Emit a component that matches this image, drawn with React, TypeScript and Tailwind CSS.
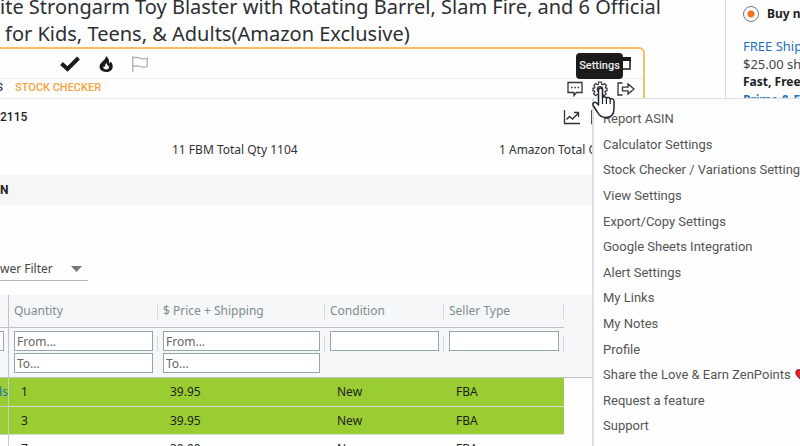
import React from 'react';

const menuItems = [
  'Report ASIN',
  'Calculator Settings',
  'Stock Checker / Variations Settings',
  'View Settings',
  'Export/Copy Settings',
  'Google Sheets Integration',
  'Alert Settings',
  'My Links',
  'My Notes',
  'Profile',
  'Share the Love & Earn ZenPoints',
  'Request a feature',
  'Support',
];

const offers = [
  { seller: 'ds', quantity: '1', price: '39.95', condition: 'New', type: 'FBA' },
  { seller: '', quantity: '3', price: '39.95', condition: 'New', type: 'FBA' },
  { seller: '', quantity: '7', price: '39.99', condition: 'New', type: 'FBA' },
];

const CheckIcon = () => (
  <svg className="w-5 h-4" viewBox="0 0 20 16" fill="none" stroke="#1b1b1b" strokeWidth="4">
    <path d="M1.5 7.5l6 5.5L18.5 2" />
  </svg>
);

const FlameIcon = () => (
  <svg className="w-4 h-4" viewBox="0 0 16 16" fill="#1b1b1b" fillRule="evenodd">
    <path d="M8 0c-.2 2.6-1.6 3.600-3.200 5.200C3 7 1.500 8.400 1.500 10.600 1.500 14 4.400 16 8 16s6.700-2 6.700-5.600c0-2-.9-3.600-2.200-4.800-.1.900-.6 1.500-1.300 1.800C11.400 4.300 10.500 1.600 8 0zM8.600 6.800c-.2 1.700.9 2.200 1.900 3.200 1.100 1.200.4 3.400-1.900 3.400-2.100 0-3.600-1-3.400-3 .9.700 1.700.4 1.900-.5.200-1.200.3-2.300 1.500-3.100z" />
  </svg>
);

const FlagIcon = () => (
  <svg className="w-4 h-4" viewBox="0 0 16 16" fill="none" stroke="#a9a9a9" strokeWidth="1.200">
    <path d="M.8 0v16M.8 2C3.500.8 5.500 1.200 8 2.200s4.500 1 7.200 0v8.300c-2.700 1-4.700 1-7.200 0s-4.500-1-7.200 0" />
  </svg>
);

const WindowIcon = () => (
  <svg className="w-4 h-4" viewBox="0 0 16 16" fill="none" stroke="#1b1b1b">
    <path d="M1 2h14v11H1z" strokeWidth="1.500" />
    <path d="M0 3h16" strokeWidth="4" />
  </svg>
);

const ChatIcon = () => (
  <svg className="w-4 h-4" viewBox="0 0 16 16" fill="none" stroke="#333" strokeWidth="1.300">
    <path d="M1 1.500h14v10H9.500L7 14.500v-3H1z" />
    <path d="M4 6.500h1.500M7.300 6.500h1.500M10.600 6.500h1.500" strokeWidth="1.600" />
  </svg>
);

const GearIcon = () => (
  <svg className="w-4 h-4" viewBox="0 0 16 16" fill="none" stroke="#333" strokeWidth="1.200">
    <path d="M6.500 1h3v2l1.500.7 1.500-1.200 2 2-1.200 1.500.5 1.200H15v2.600h-1.600l-.5 1.400 1.200 1.500-2 2-1.500-1.200-1.100.5v1.500h-3V14l-1.400-.6-1.500 1.200-2-2 1.200-1.500-.5-1.300H1V7.200h1.500L3 6 1.800 4.500l2-2 1.500 1.200L6.500 3z" />
    <circle cx="8" cy="8.300" r="2.700" />
  </svg>
);

const ExitIcon = () => (
  <svg className="w-[18px] h-4" viewBox="0 0 18 16" fill="none" stroke="#333" strokeWidth="1.300">
    <path d="M5.500 2H1v12h4.500" />
    <path d="M5.500 6.200H11V3l6 5-6 5V9.800H5.500z" />
  </svg>
);

const ChartIcon = () => (
  <svg className="w-[18px] h-4" viewBox="0 0 18 16" fill="none" stroke="#333" strokeWidth="1.300">
    <path d="M2.500 1v13.500H18M4.500 10.500l3-3 3 2.500 5.500-5.500M12 3.500h4.500V8" />
  </svg>
);

const BarsIcon = () => (
  <svg className="w-4 h-4" viewBox="0 0 16 16" fill="none" stroke="#1b1b1b" strokeWidth="1.500">
    <path d="M1 1v13.500h14M5 14V8M9 14V4M13 14V9" />
  </svg>
);

const HeartIcon = () => (
  <svg className="w-3.5 h-3.5 shrink-0" viewBox="0 0 14 14">
    <path d="M7 12.500C3 9.500.8 7.200.8 4.500.8 1 5.300.6 7 3.600 8.700.6 13.200 1 13.200 4.500c0 2.700-2.200 5-6.200 8z" fill="#e5252a" stroke="#6d1a1c" />
  </svg>
);

const HandCursor = () => (
  <svg className="absolute left-0 top-2 z-30 w-6 h-8 pointer-events-none" viewBox="0 0 24 32" fill="#fff" stroke="#1f2430" strokeWidth="1.500" strokeLinejoin="round">
    <path d="M6.500 18V3c0-2.600 4-2.600 4 0v8c.5-1.900 3.700-1.700 3.900.5.700-1.500 3.600-1.200 3.800.9.900-1.100 3.600-.8 3.800 1.600v7.500c0 5.500-3 9-8.500 9-4.500 0-6.500-2.400-8.200-5.500L1.200 18.500c-1.300-2.600 1.600-4.300 3.300-2.500z" />
    <path d="M10.500 11v6M14.400 12v5M18.200 13v4" strokeWidth="1.200" />
  </svg>
);

const SettingsMenu = () => (
  <ul className="absolute left-0 top-full z-20 grid auto-rows-fr w-60 h-[360px] pt-[7px] pb-[19px] border-l-2 border-t border-[#dfdfe3] bg-[#fefefe] text-[13px] text-[#555]">
    {menuItems.map((item) => (
      <li key={item} className="flex items-center pl-[9px]">
        <button type="button" className="flex items-center gap-1 whitespace-nowrap">
          {item}
          {item.startsWith('Share') && <HeartIcon />}
        </button>
      </li>
    ))}
  </ul>
);

const Toolbar = () => (
  <div className="flex items-center justify-between h-[30px] border-b border-[#ececf0] pl-[60px] pr-3">
    <div className="flex items-center gap-[18px]">
      <button type="button" aria-label="Eligible"><CheckIcon /></button>
      <button type="button" aria-label="Hot item"><FlameIcon /></button>
      <button type="button" aria-label="Flag"><FlagIcon /></button>
    </div>
    <button type="button" aria-label="Window"><WindowIcon /></button>
  </div>
);

const Tabs = () => (
  <div className="flex items-center justify-between h-5 border-b border-[#ececf0] pr-2 font-['Roboto',sans-serif] text-[11px]">
    <div className="flex items-center gap-3 font-medium">
      <a href="#settings" className="w-[3px] flex justify-end overflow-hidden text-[#333]">S</a>
      <a href="#stock" className="text-[#f2a33c]">STOCK CHECKER</a>
    </div>
    <div className="flex items-center gap-[9px] h-full">
      <button type="button" aria-label="Messages"><ChatIcon /></button>
      <div className="relative flex items-center h-full">
        <button type="button" aria-label="Settings"><GearIcon /></button>
        <span className="absolute -left-4 bottom-full z-20 w-[47px] h-[26px] text-center leading-[26px] rounded bg-[#1b1b1b] text-[#eee] font-medium" role="tooltip">
          Settings
        </span>
        <SettingsMenu />
        <HandCursor />
      </div>
      <button type="button" aria-label="Log out"><ExitIcon /></button>
    </div>
  </div>
);

const separator = 'w-px h-4 bg-[#d5dadd]';
const filterInput = 'block w-full h-5 px-[2px] border border-[#95a5ac] bg-white placeholder:text-[#666]';

const HeaderCell = ({ children }: { children: React.ReactNode }) => (
  <th scope="col" className="p-0 border-b border-[#bdc3c7] font-normal text-left text-[#7f8c8d]">
    <div className="flex items-center justify-between pl-[5px]">
      {children}
      <span className={separator} />
    </div>
  </th>
);

const FilterCell = ({ label, range }: { label: string; range?: boolean }) => (
  <td className="p-0 align-top border-b border-[#bdc3c7]">
    <div className="flex justify-between gap-1 pt-[3px] pl-[5px]">
      <div className="grow flex flex-col gap-[2px]">
        <input className={filterInput} aria-label={label} placeholder={range ? 'From...' : ''} />
        {range && <input className={filterInput} aria-label={`${label} to`} placeholder="To..." />}
      </div>
      <span className={`${separator} mt-[5px]`} />
    </div>
  </td>
);

const OffersTable = () => (
  <table className="w-full table-fixed border-separate border-spacing-0 font-['Noto_Sans',sans-serif] text-[12px] leading-4">
    <colgroup>
      <col className="w-[9px]" />
      <col className="w-[149px]" />
      <col className="w-[167px]" />
      <col className="w-[119px]" />
      <col className="w-[120px]" />
      <col />
    </colgroup>
    <thead className="bg-[#f5f7f8]">
      <tr className="h-[33px]">
        <td className="p-0 border-r border-b border-[#bdc3c7]" />
        <HeaderCell>Quantity</HeaderCell>
        <HeaderCell>$ Price + Shipping</HeaderCell>
        <HeaderCell>Condition</HeaderCell>
        <HeaderCell>Seller Type</HeaderCell>
        <td className="p-0" />
      </tr>
      <tr className="h-[50px]">
        <td className="p-0 align-top border-r border-b border-[#bdc3c7]">
          <div className="w-1 h-5 mt-[3px] border border-l-0 border-[#95a5ac] bg-white" />
        </td>
        <FilterCell label="Quantity" range />
        <FilterCell label="Price" range />
        <FilterCell label="Condition" />
        <FilterCell label="Seller type" />
        <td className="p-0 border-b border-[#bdc3c7]" />
      </tr>
    </thead>
    <tbody className="text-[#222]">
      {offers.map((offer, i) => {
        const cell = i < 2 ? 'p-0 pl-3 bg-[#9acd32] border-b border-[#d9dcde]' : 'p-0 pl-3';
        return (
          <tr key={i} className={i === 0 ? 'h-[29px]' : 'h-[28px]'}>
            <td className={i < 2 ? 'p-0 bg-[#9acd32] border-b border-r border-[#c5cacc]' : 'p-0 border-r border-[#c5cacc]'}>
              <a href="#seller" className="flex justify-end w-2 overflow-hidden text-[#1f6fc0]">{offer.seller}</a>
            </td>
            <td className={cell}>{offer.quantity}</td>
            <td className={cell}>{offer.price}</td>
            <td className={cell}>{offer.condition}</td>
            <td className={cell}>{offer.type}</td>
            <td className="p-0" />
          </tr>
        );
      })}
    </tbody>
  </table>
);

const BuyBox = () => (
  <aside className="w-[75px] shrink-0 overflow-hidden border-l border-[#d5d9dd] pl-[17px] whitespace-nowrap text-[12px] leading-[18px] text-[#222]">
    <label className="flex items-center gap-2 pt-[5px] font-bold">
      <input
        type="radio"
        name="buy"
        defaultChecked
        className="appearance-none shrink-0 w-4 h-4 rounded-full border border-[#777] bg-[radial-gradient(circle,#ee7220_3px,white_4px)]"
      />
      Buy new:
    </label>
    <p className="pt-[14px] text-[13px]">
      <a href="#shipping" className="text-[#1f6fc0]">FREE Shipping</a>
    </p>
    <p className="text-[13px] text-[#444]">$25.00 shipped</p>
    <p className="font-bold">Fast, Free</p>
    <a href="#prime" className="font-bold text-[#1f6fc0]">Prime &amp; Free</a>
  </aside>
);

const App: React.FC = () => {
  return (
    <div className="flex h-screen overflow-hidden bg-[#fefefe] font-['Noto_Sans',sans-serif]">
      <main className="grow min-w-0 pr-20">
        <h1 className="-mt-[7px] whitespace-nowrap text-[20px] leading-[27px] text-[#2c2f33]">
          ite Strongarm Toy Blaster with Rotating Barrel, Slam Fire, and 6 Official
          <br />
          <span className="pl-[5px]">for Kids, Teens, &amp; Adults(Amazon Exclusive)</span>
        </h1>
        <section className="h-screen border-t-2 border-r-2 border-[#f9bd62] rounded-tr-md font-['Roboto',sans-serif]">
          <Toolbar />
          <Tabs />
          <div className="flex items-center justify-between h-[35px] pr-[36px] text-[12px]">
            <span className="font-medium text-[#222]">2115</span>
            <div className="flex gap-[11px]">
              <button type="button" aria-label="Chart"><ChartIcon /></button>
              <button type="button" aria-label="Bars"><BarsIcon /></button>
            </div>
          </div>
          <div className="flex items-center h-[32px] pl-[172px] font-['Noto_Sans',sans-serif] text-[12px] text-[#333] whitespace-nowrap">
            <span className="w-[327px]">11 FBM Total Qty 1104</span>
            <span>1 Amazon Total Qty 0</span>
          </div>
          <h2 className="mt-[9px] h-[30px] leading-[30px] bg-[#f6f6f7] text-[12px] font-bold text-[#222]">N</h2>
          <div className="flex mt-[53px]">
            <button type="button" className="flex items-center justify-between w-[88px] h-[23px] pr-[6px] border-b border-[#b5b5ba] font-['Noto_Sans',sans-serif] text-[12px] text-[#444]">
              wer Filter
              <svg className="w-[11px] h-[6px]" viewBox="0 0 11 6" fill="#777">
                <path d="M0 0h11L5.500 6z" />
              </svg>
            </button>
          </div>
          <div className="mt-[14px]">
            <OffersTable />
          </div>
        </section>
      </main>
      <BuyBox />
    </div>
  );
};

export default App;
